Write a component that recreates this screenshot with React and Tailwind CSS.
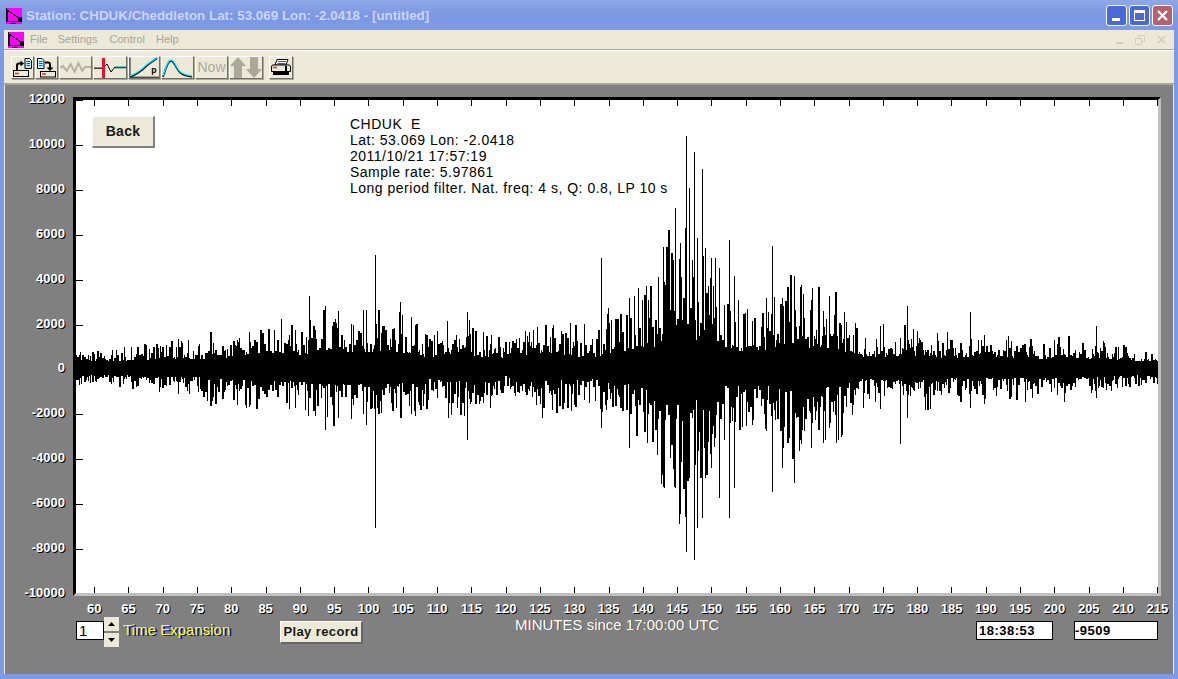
import React from 'react';

const yLabels = ['12000', '10000', '8000', '6000', '4000', '2000', '0', '-2000', '-4000', '-6000', '-8000', '-10000'];
const xLabels = [];
for (let m = 60; m <= 215; m += 5) xLabels.push(m);

// rough outline of the trace, [px from left of plot, amplitude in px]
const envelope = [
  [0, 17], [60, 20], [125, 24], [135, 46], [175, 58], [205, 46], [240, 54], [300, 54], [330, 50], [370, 42],
  [430, 40], [490, 50], [530, 70], [565, 92], [590, 140], [604, 165], [640, 160], [655, 110], [700, 125], [730, 88],
  [780, 62], [830, 54], [870, 38], [930, 34], [1000, 27], [1040, 20], [1082, 16],
];

// big single swings: [x, up, down]
const spikes = [
  [299, 113, 160], [233, 72, 30], [249, 62, 62], [324, 66, 50], [391, 56, 72], [525, 110, 60], [553, 70, 80],
  [599, 160, 120], [604, 125, 115], [610, 232, 184], [613, 180, 110], [618, 216, 192], [621, 130, 160],
  [626, 199, 150], [629, 120, 110], [635, 110, 100], [643, 100, 130], [653, 128, 150], [658, 92, 120],
  [696, 122, 124], [706, 70, 100], [718, 92, 115], [735, 68, 70], [753, 72, 60], [760, 48, 75], [831, 62, 50], [824, 30, 76],
  [894, 56, 40], [1020, 42, 30],
];

const envAt = (x) => {
  for (let i = 1; i < envelope.length; i++) {
    if (x <= envelope[i][0]) {
      const [x0, a0] = envelope[i - 1];
      const [x1, a1] = envelope[i];
      return a0 + ((a1 - a0) * (x - x0)) / (x1 - x0);
    }
  }
  return 16;
};

const buildTrace = () => {
  let seed = 4711;
  const rnd = () => {
    seed = (seed * 16807) % 2147483647;
    return seed / 2147483647;
  };
  let d = '';
  let burst = 0.9;
  let up = 0;
  let down = 0;
  let run = 0;
  for (let x = 0; x < 1082; x++) {
    burst = Math.min(1.15, Math.max(0.55, burst + (rnd() - 0.5) * 0.14));
    const env = envAt(x) * burst;
    // the swings hold for a pixel or two, so bars come out with gaps between them
    if (run <= 0) {
      up = 4 + env * (0.2 + 0.8 * Math.pow(rnd(), 1.7));
      down = 4 + env * (0.2 + 0.8 * Math.pow(rnd(), 1.7));
      run = rnd() < 0.35 ? 2 : 1;
    }
    run--;
    d += `M${x + 0.5} ${Math.round(268 - up)}V${Math.round(268 + down)}`;
  }
  spikes.forEach(([x, u, dn]) => {
    d += `M${x + 0.5} ${268 - u}V${268 + dn}`;
  });
  return d;
};

const trace = buildTrace();

const AppIcon = ({ className = '' }) => (
  <svg width="16" height="16" viewBox="0 0 16 16" shapeRendering="crispEdges" className={`shrink-0 ${className}`}>
    <rect width="16" height="16" fill="#ff00ff" />
    <path d="M0.5 0V13.5H16" fill="none" stroke="#000" />
    <path d="M1 2L13 10V13H1Z" fill="#ff00ff" stroke="#000" />
    <rect x="12" y="9" width="4" height="4" fill="#000" />
    <path d="M7 13V15.5M4 15.5H10" stroke="#000" />
  </svg>
);

const ToolButton = ({ className = '', children }) => (
  <div className={`h-[23px] flex items-center justify-center bg-[#ece9d8] border-t border-l border-white border-r border-b border-r-[#6f6e66] border-b-[#6f6e66] shadow-[1px_1px_0_#aca899] ${className}`}>
    {children}
  </div>
);

const LoadIcon = () => (
  <svg width="21" height="20" viewBox="0 0 21 20" fill="none">
    <path d="M13 0.5H17.5L19.5 2.5V10.5H13Z" fill="#b8f4ff" stroke="#000" />
    <path d="M14.5 3.5H18M14.5 5.5H18M14.5 7.5H18" stroke="#005fb8" />
    <path d="M5 12V7.5Q5 5.5 7 5.5H9" stroke="#000" strokeWidth="2" />
    <path d="M8.5 2.5L12 5.5L8.5 8.5Z" fill="#000" />
    <rect x="1.5" y="12.5" width="15" height="6" fill="#ece9d8" stroke="#000" />
    <path d="M3 15.5H7" stroke="#e03030" strokeWidth="1.5" />
  </svg>
);

const SaveIcon = () => (
  <svg width="21" height="20" viewBox="0 0 21 20" fill="none">
    <path d="M1.5 0.5H6L8 2.5V10.5H1.5Z" fill="#b8f4ff" stroke="#000" />
    <path d="M3 3.5H6.5M3 5.5H6.5M3 7.5H6.5" stroke="#005fb8" />
    <path d="M9 4.5H12Q14 4.5 14 6.5V10" stroke="#000" strokeWidth="2" />
    <path d="M10.5 9.5H17.5L14 13Z" fill="#000" />
    <rect x="4.5" y="13.5" width="15" height="5.5" fill="#ece9d8" stroke="#000" />
    <path d="M6 16H10" stroke="#e03030" strokeWidth="1.5" />
  </svg>
);

const SquiggleIcon = () => (
  <svg width="32" height="14" viewBox="0 0 32 14" fill="none">
    <path d="M0 7L3 5L7 10L11 3L15 11L19 2L23 10L26 6H32" stroke="#b4b1a2" strokeWidth="2" />
  </svg>
);

const PickIcon = () => (
  <svg width="32" height="20" viewBox="0 0 32 20" fill="none">
    <path d="M9 10L13 6L17 14L21 9" stroke="#000" strokeWidth="1" />
    <path d="M0 10H9M21 9.5H32" stroke="#000" strokeWidth="1.5" />
    <path d="M0 9.5H9M21 9H32" stroke="#00e5ff" strokeWidth="0.8" />
    <rect x="8" y="0" width="3" height="20" fill="#e8102a" />
  </svg>
);

const ResponseIcon = () => (
  <svg width="31" height="22" viewBox="0 0 31 22" fill="none">
    <path d="M1 0V20.5H31" stroke="#000" />
    <path d="M1 20C8 18 14 13 19 8L29 1" stroke="#000" strokeWidth="1.8" />
    <path d="M1 19C8 17 14 12 19 7L29 0" stroke="#00e5ff" strokeWidth="1.4" />
    <text x="23" y="16" fontSize="9" fontFamily="Liberation Sans" fontWeight="bold" fill="#000">p</text>
  </svg>
);

const PeakIcon = () => (
  <svg width="31" height="20" viewBox="0 0 31 20" fill="none">
    <path d="M1 19C4 10 6 3 9 3C13 3 14 13 20 16C23 18 26 18 30 19" stroke="#000" strokeWidth="1.6" />
    <path d="M1 18C4 9 6 2 9 2C13 2 14 12 20 15C23 17 26 17 30 18" stroke="#00e5ff" strokeWidth="1.2" />
  </svg>
);

const ArrowsIcon = () => (
  <svg width="32" height="21" viewBox="0 0 32 21" fill="#aca899">
    <path d="M8 0L16 9H12V21H4V9H0Z" />
    <path d="M24 21L32 12H28V0H20V12H16Z" />
  </svg>
);

const PrintIcon = () => (
  <svg width="20" height="17" viewBox="0 0 20 17" fill="none">
    <path d="M6 0.5H17L15 6H4Z" fill="#fff" stroke="#000" />
    <path d="M7 2.5H15M6.5 4.5H14.5" stroke="#1c5fd0" />
    <path d="M2 6H18Q19.5 6 19.5 8V12.5H0.5V8Q0.5 6 2 6Z" fill="#ece9d8" stroke="#000" />
    <path d="M2 8.5H6" stroke="#e03030" strokeWidth="1.5" />
    <path d="M15 7V12" stroke="#000" strokeWidth="2" />
    <rect x="2" y="13" width="16" height="3" fill="#000" />
  </svg>
);

const WinButton = ({ className, children }) => (
  <div className={`w-[21px] h-[21px] rounded-[3px] border border-white flex items-center justify-center ${className}`}>
    {children}
  </div>
);

export default function App() {
  return (
    <div className="w-[1178px] h-[679px] flex flex-col overflow-hidden bg-[#7d9ae4] font-['Liberation_Sans',Arial,sans-serif]">
      {/* title bar */}
      <div className="h-[30px] shrink-0 flex items-center pl-[6px] pr-[5px] bg-gradient-to-b from-[#8fa8e8] via-[#7d97e2] to-[#7f9be4]">
        <AppIcon className="mt-[2px]" />
        <span className="ml-[4px] mt-[3px] text-[13.4px] font-bold text-[#c9d6f8] whitespace-nowrap">
          Station: CHDUK/Cheddleton Lat: 53.069 Lon: -2.0418 - [untitled]
        </span>
        <div className="ml-auto flex gap-[2px]">
          <WinButton className="bg-[#4a69d6]">
            <div className="w-[8px] h-[3px] bg-white mt-[9px] mr-[2px]" />
          </WinButton>
          <WinButton className="bg-[#4a69d6]">
            <div className="w-[11px] h-[11px] border border-white border-t-[3px]" />
          </WinButton>
          <WinButton className="bg-[#b5626f]">
            <svg width="13" height="13" viewBox="0 0 13 13">
              <path d="M2 2L11 11M11 2L2 11" stroke="#fff" strokeWidth="2.2" />
            </svg>
          </WinButton>
        </div>
      </div>

      {/* window body */}
      <div className="flex-1 min-h-0 mx-[4px] mb-[5px] flex flex-col bg-[#ece9d8]">
        {/* menu */}
        <div className="h-[20px] shrink-0 flex items-center pl-[4px] pr-[8px] text-[11px] text-[#a7a596] border-b border-b-[#aca899]">
          <AppIcon />
          <span className="ml-[6px]">File</span>
          <span className="ml-[10px]">Settings</span>
          <span className="ml-[12px]">Control</span>
          <span className="ml-[11px]">Help</span>
          <div className="ml-auto flex items-center gap-[12px] text-[#cfccbc]">
            <div className="w-[7px] h-[2px] mt-[6px] bg-[#cfccbc]" />
            <svg width="10" height="10" viewBox="0 0 10 10" fill="none" stroke="#cfccbc">
              <path d="M0.5 3.5H6.5V9.5H0.5ZM3 3V0.5H9.5V6.5H7" />
            </svg>
            <svg width="9" height="9" viewBox="0 0 9 9" stroke="#cfccbc" strokeWidth="1.6">
              <path d="M1 1L8 8M8 1L1 8" />
            </svg>
          </div>
        </div>

        {/* toolbar */}
        <div className="h-[35px] shrink-0 flex items-start pt-[5px] pl-[7px] border-t border-t-white border-b-2 border-b-[#aca899]">
          <ToolButton className="w-[23px]"><LoadIcon /></ToolButton>
          <ToolButton className="w-[23px] ml-[1px]"><SaveIcon /></ToolButton>
          <ToolButton className="w-[33px] ml-[1px]"><SquiggleIcon /></ToolButton>
          <ToolButton className="w-[34px] ml-[1px]"><PickIcon /></ToolButton>
          <ToolButton className="w-[32px] ml-[1px]"><ResponseIcon /></ToolButton>
          <ToolButton className="w-[33px] ml-[1px]"><PeakIcon /></ToolButton>
          <ToolButton className="w-[33px] ml-[1px] text-[14px] text-[#aca899]">Now</ToolButton>
          <ToolButton className="w-[34px] ml-[1px]"><ArrowsIcon /></ToolButton>
          <ToolButton className="w-[24px] ml-[6px]"><PrintIcon /></ToolButton>
        </div>

        {/* graph area */}
        <div className="flex-1 min-h-0 bg-[#808080] mx-[1px] pt-[12px] text-white font-bold text-[13px] [text-shadow:1px_1px_0_#000]">
          <div className="flex h-[499px]">
            <div className="w-[68px] shrink-0 flex flex-col justify-between items-end pr-[8px] -mt-[6px] h-[510px] leading-[16px]">
              {yLabels.map((l) => (
                <div key={l}>{l}</div>
              ))}
            </div>
            <div className="w-[1088px] h-[499px] shrink-0 border-t-[3px] border-l-[3px] border-black border-r-[3px] border-r-[#c0c0c0] border-b-[3px] border-b-[#c0c0c0] bg-white relative [text-shadow:none] font-normal">
              <svg width="1082" height="493" viewBox="0 0 1082 493" className="block" shapeRendering="crispEdges">
                <path d={trace} stroke="#000" strokeWidth="1" fill="none" />
                {xLabels.map((m, i) => (
                  <path key={m} d={`M${Math.round(18 + i * 34.3) + 0.5} 0V6M${Math.round(18 + i * 34.3) + 0.5} 487V493`} stroke="#000" />
                ))}
                {yLabels.map((l, i) => (
                  <path key={l} d={`M0 ${Math.round(i * 44.9) + 0.5}H7`} stroke="#000" />
                ))}
              </svg>
              <button className="absolute left-[16px] top-[16px] w-[63px] h-[32px] bg-[#ece9d8] text-[14px] font-bold tracking-[0.3px] text-[#1a1a1a] border-t border-l border-white border-r-2 border-b-2 border-r-[#808080] border-b-[#808080]">
                Back
              </button>
              <div className="absolute left-[274px] top-[16px] text-[14px] tracking-[0.5px] leading-[16px] text-black whitespace-nowrap">
                <div>CHDUK&nbsp; E</div>
                <div>Lat: 53.069 Lon: -2.0418</div>
                <div>2011/10/21 17:57:19</div>
                <div>Sample rate: 5.97861</div>
                <div>Long period filter. Nat. freq: 4 s, Q: 0.8, LP 10 s</div>
              </div>
            </div>
          </div>

          {/* x axis labels */}
          <div className="ml-[72px] h-[16px] mt-[5px] flex">
            {xLabels.map((m) => (
              <div key={m} className="w-[34.3px] text-center leading-[16px] shrink-0">{m}</div>
            ))}
          </div>

          {/* bottom controls */}
          <div className="ml-[71px] flex items-start">
            <div className="mt-[4px] w-[28px] h-[19px] shrink-0 bg-white border border-black text-black font-normal text-[15px] leading-[17px] pl-[2px] [text-shadow:none]">1</div>
            <div className="flex flex-col w-[16px] shrink-0 gap-[1px] [text-shadow:none]">
              <div className="h-[15px] bg-[#ece9d8] border-b border-r border-[#808080] flex items-center justify-center">
                <svg width="7" height="4" viewBox="0 0 7 4"><path d="M3.5 0L7 4H0Z" fill="#000" /></svg>
              </div>
              <div className="h-[15px] bg-[#ece9d8] border-b border-r border-[#808080] flex items-center justify-center">
                <svg width="7" height="4" viewBox="0 0 7 4"><path d="M0 0H7L3.5 4Z" fill="#000" /></svg>
              </div>
            </div>
            <div className="ml-[3px] w-[110px] shrink-0 mt-[5px] text-[15px] leading-[16px] font-normal text-[#ffff00] whitespace-nowrap [text-shadow:2px_1px_0_#0000e0]">Time Expansion</div>
            <button className="ml-[47px] mt-[4px] w-[83px] h-[23px] shrink-0 bg-[#ece9d8] text-[13px] font-bold tracking-[0.4px] text-[#1a1a1a] [text-shadow:none] border-t border-l border-white border-r-2 border-b-2 border-r-[#666] border-b-[#666]">
              Play record
            </button>
            <div className="ml-[152px] w-[205px] shrink-0 text-[15px] font-normal leading-[16px] whitespace-nowrap [text-shadow:1px_0_0_#555] text-white">MINUTES since 17:00:00 UTC</div>
            <div className="ml-[256px] mt-[4px] w-[77px] h-[19px] shrink-0 bg-white border border-black text-black font-bold text-[13px] tracking-[0.5px] leading-[17px] pl-[2px] [text-shadow:none]">18:38:53</div>
            <div className="ml-[21px] mt-[4px] w-[84px] h-[19px] shrink-0 bg-white border border-black text-black font-bold text-[13px] tracking-[0.5px] leading-[17px] [text-shadow:none]">-9509</div>
          </div>
        </div>
      </div>
    </div>
  );
}
